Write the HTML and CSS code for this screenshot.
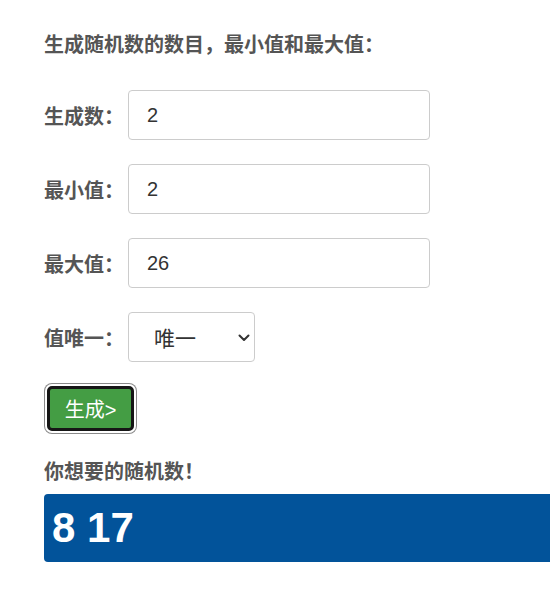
FILE: index.html
```html
<!DOCTYPE html>
<html lang="zh">
<head>
<meta charset="utf-8">
<title>随机数生成</title>
<link rel="stylesheet" href="styles.css">
</head>
<body>
<div class="page">
  <h4 class="title">生成随机数的数目，最小值和最大值：</h4>
  <div class="row">
    <label class="label">生成数：</label>
    <input class="field" type="text" value="2">
  </div>
  <div class="row">
    <label class="label">最小值：</label>
    <input class="field" type="text" value="2">
  </div>
  <div class="row">
    <label class="label">最大值：</label>
    <input class="field" type="text" value="26">
  </div>
  <div class="row">
    <label class="label">值唯一：</label>
    <div class="select-wrap">
      <select class="select">
        <option>唯一</option>
        <option>可重复</option>
      </select>
      <svg class="chev" width="12" height="8" viewBox="0 0 12 8"><path d="M1.5 1.5 L6 6 L10.5 1.5" fill="none" stroke="#333" stroke-width="2" stroke-linecap="round" stroke-linejoin="round"/></svg>
    </div>
  </div>
  <button class="btn" type="button">生成&gt;</button>
  <h4 class="title result-title">你想要的随机数！</h4>
  <div class="result">8 17</div>
</div>
</body>
</html>
```
FILE: styles.css
```css
html, body {
  margin: 0;
  padding: 0;
  background: #fff;
  overflow: hidden;
}
.page {
  padding: 34px 0 0 44px;
  font-family: "Liberation Sans", Arial, "Noto Sans CJK SC", sans-serif;
  color: #555;
}
.title {
  margin: 0 0 34px;
  font-size: 20px;
  line-height: 22px;
  font-weight: bold;
  color: #555;
  font-family: "Liberation Sans", "Noto Sans CJK SC", sans-serif;
}
.row {
  display: flex;
  align-items: center;
  height: 50px;
  margin-bottom: 24px;
}
.label {
  width: 84px;
  flex: none;
  font-size: 20px;
  font-weight: bold;
  color: #555;
  font-family: "Liberation Sans", "Noto Sans CJK SC", sans-serif;
}
.field {
  box-sizing: border-box;
  width: 302px;
  height: 50px;
  border: 1px solid #ccc;
  border-radius: 4px;
  padding: 0 18px;
  font-size: 20px;
  color: #333;
  font-family: "Liberation Sans", Arial, sans-serif;
  outline: none;
}
.select-wrap {
  position: relative;
  width: 127px;
  height: 50px;
}
.select {
  appearance: none;
  -webkit-appearance: none;
  box-sizing: border-box;
  width: 100%;
  height: 100%;
  border: 1px solid #ccc;
  border-radius: 4px;
  background: #fff;
  padding: 0 0 0 25px;
  font-size: 21px;
  color: #333;
  font-family: "Noto Sans CJK SC", sans-serif;
  outline: none;
}
.chev {
  position: absolute;
  right: 5px;
  top: 22px;
  pointer-events: none;
}
.btn {
  display: block;
  box-sizing: border-box;
  width: 87px;
  height: 45px;
  margin: 2px 0 0 3px;
  background: #449d44;
  border: 3px solid #161616;
  border-radius: 5px;
  box-shadow: 0 0 0 2px #fff, 0 0 0 3px #8a8a8a;
  color: #fff;
  font-size: 20px;
  font-family: "Liberation Sans", "Noto Sans CJK SC", sans-serif;
  padding: 0;
}
.result-title {
  margin: 30px 0 11px;
}
.result {
  display: flex;
  align-items: center;
  height: 68px;
  background: #02539a;
  border-radius: 4px 0 0 4px;
  padding-left: 8px;
  color: #fff;
  font-size: 42px;
  font-weight: bold;
  font-family: "Liberation Sans", Arial, sans-serif;
}
```
